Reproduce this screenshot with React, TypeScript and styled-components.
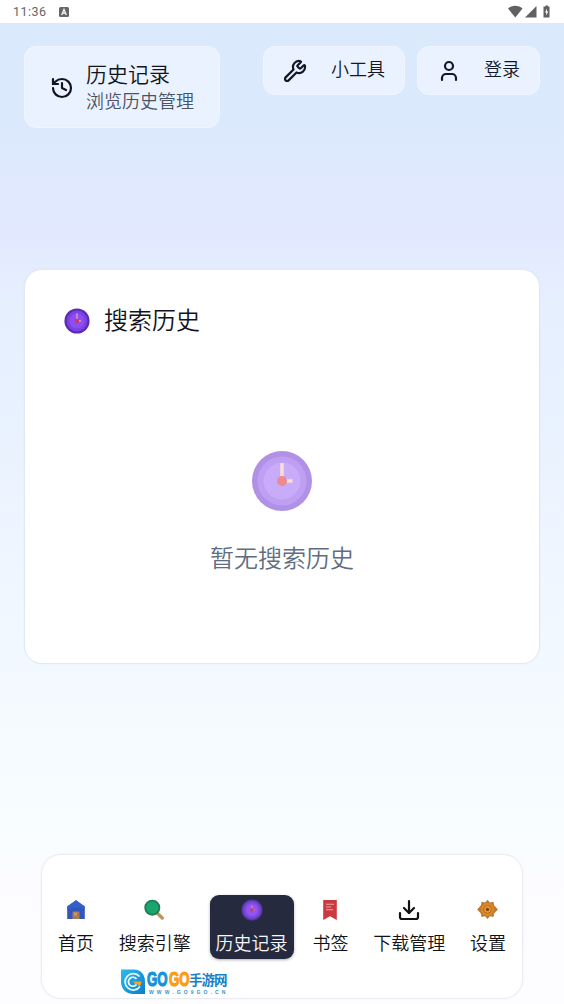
import React from "react";
import styled, { createGlobalStyle } from "styled-components";
import { Download, History, User, Wrench } from "lucide-react";

const Global = createGlobalStyle`
  * { box-sizing: border-box; }
  body { margin: 0; font-family: "Noto Sans CJK SC", sans-serif; font-weight: 350; color: #111420; }
  svg { display: block; flex: none; }
`;

const Screen = styled.div`
  width: 564px;
  height: 1004px;
  overflow: hidden;
  display: flex;
  flex-direction: column;
`;

const StatusBar = styled.div`
  height: 23px;
  flex: none;
  background: #fff;
  display: flex;
  align-items: center;
  padding: 0 13px 0 13px;
  font: 12.5px/22px Roboto, sans-serif;
  letter-spacing: 0.5px;
  color: #666;
`;

const StatusTime = styled.span`
  margin-right: 12px;
`;

const StatusIcons = styled.div`
  margin-left: auto;
  display: flex;
`;

const Page = styled.main`
  position: relative;
  flex: 1;
  display: flex;
  flex-direction: column;
  padding: 23px 24px 5px;
  background: linear-gradient(180deg, #dbe9fd 0%, #dce9fd 12%, #e1e9fe 17%, #e2e9fe 22%, #e6effe 28%, #e8f1fe 40%, #eef5ff 52%, #f3f9ff 68%, #f8fdff 82%, #fcfbff 88%, #fdfdff 100%);
`;

const Header = styled.header`
  display: flex;
  align-items: flex-start;
  gap: 12px;
`;

const Tile = styled.div`
  display: flex;
  align-items: center;
  background: #ebf2ff;
  border: 1px solid #f0f5ff;
  border-radius: 12px;
`;

const TitleTile = styled(Tile)`
  width: 196px;
  height: 82px;
  padding: 2px 0 0 25px;
  gap: 12px;
  margin-right: auto;
`;

const TitleText = styled.div`
  display: flex;
  flex-direction: column;
  padding-bottom: 5px;
`;

const Title = styled.h1`
  margin: 0;
  font-size: 21px;
  font-weight: 350;
  line-height: 28px;
`;

const Subtitle = styled.span`
  font-size: 18px;
  line-height: 26px;
  color: #4a5263;
`;

const ActionTile = styled(Tile)<{ $width: number }>`
  width: ${(p) => p.$width}px;
  height: 49px;
  padding: 0 19px;
  justify-content: space-between;
  font-size: 18px;
  line-height: 26px;
  color: #141824;
  & > span { margin-top: -5px; }
`;

const HistoryCard = styled.section`
  margin-top: 141px;
  height: 395px;
  border: 1px solid #e3e9f3;
  border-radius: 18px;
  background: #fff;
  box-shadow: 0 0 2px rgba(40, 60, 100, 0.05);
  display: flex;
  flex-direction: column;
`;

const CardHeading = styled.h2`
  margin: 0;
  padding: 33px 0 0 39px;
  display: flex;
  align-items: center;
  gap: 14px;
  font-size: 24px;
  line-height: 36px;
  font-weight: 350;
  & > span { margin: -2px 0 2px; }
`;

const EmptyState = styled.div`
  padding-top: 112px;
  display: flex;
  flex-direction: column;
  align-items: center;
  gap: 28px;
  font-size: 24px;
  line-height: 36px;
  color: #5f6d82;
`;

const NavBar = styled.nav`
  margin: auto 17px 0;
  height: 145px;
  padding: 40px 9px 0 10px;
  border: 1px solid #e9ecf1;
  border-radius: 20px;
  background: #fff;
  box-shadow: 0 0 3px rgba(40, 60, 100, 0.05);
  display: flex;
  align-items: flex-start;
  justify-content: space-between;
  & > :last-child { margin-right: 1px; }
`;

const NavItem = styled.div<{ $active?: boolean }>`
  height: 64px;
  padding: 3px 6px 0;
  border-radius: 9px;
  display: flex;
  flex-direction: column;
  align-items: center;
  font-size: 18px;
  line-height: 26px;
  gap: 7px;
  color: ${(p) => (p.$active ? "#f7f8fc" : "#111216")};
  background: ${(p) => (p.$active ? "#252a3e" : "transparent")};
  box-shadow: ${(p) => (p.$active ? "0 1px 3px rgba(20, 24, 40, 0.35)" : "none")};
`;

const Watermark = styled.div`
  position: absolute;
  left: 120px;
  top: 946px;
  display: flex;
  gap: 2px;
`;

const WatermarkText = styled.div`
  display: flex;
  flex-direction: column;
`;

const Brand = styled.div`
  display: flex;
  align-items: center;
  height: 20px;
  font: 700 21px/20px "Liberation Sans", sans-serif;
`;

const BrandPart = styled.span<{ $orange?: boolean }>`
  display: block;
  width: 21.5px;
  white-space: nowrap;
  -webkit-text-stroke: 1.2px ${(p) => (p.$orange ? "#fb9c13" : "#1592d8")};
  color: ${(p) => (p.$orange ? "#fb9c13" : "#1592d8")};
  transform: scaleX(0.63);
  transform-origin: left;
`;

const BrandCn = styled.span`
  font: 700 13.5px/20px "Noto Sans CJK SC", sans-serif;
  letter-spacing: -1px;
  margin-left: -1px;
  color: #1681c9;
`;

const BrandUrl = styled.span`
  font: 700 5px/6px "Liberation Sans", sans-serif;
  letter-spacing: 3.1px;
  padding-left: 2px;
  color: #2697d5;
  white-space: nowrap;
`;

function ClockIcon({ size }: { size: number }) {
  return (
    <svg width={size} height={size} viewBox="0 0 60 60">
      <circle cx="30" cy="30" r="29" fill="#5b2bb8" />
      <circle cx="30" cy="30" r="24" fill="#7a42e2" />
      <circle cx="30" cy="30" r="17.5" fill="#8d4df0" />
      <path d="M30 12v18M30 30h9" stroke="#e2a0b8" strokeWidth="3" />
      <circle cx="30" cy="30" r="5" fill="#c8386c" />
    </svg>
  );
}

function EmptyClockIcon() {
  return (
    <svg width="60" height="60" viewBox="0 0 60 60">
      <circle cx="30" cy="30" r="30" fill="#b091e6" />
      <circle cx="30" cy="30" r="24.5" fill="#bf9ff3" />
      <circle cx="30" cy="30" r="18.5" fill="#c8abf9" />
      <path d="M30 12v18M30 30h10.5" stroke="#fadbd5" strokeWidth="3.6" />
      <circle cx="30" cy="30" r="5" fill="#eb8b8f" />
    </svg>
  );
}

function GlowClockIcon() {
  return (
    <svg width="24" height="24" viewBox="0 0 24 24">
      <defs>
        <radialGradient id="glow">
          <stop offset="0.45" stopColor="#9455ee" />
          <stop offset="0.8" stopColor="#6e41ce" />
          <stop offset="1" stopColor="#3c2d78" />
        </radialGradient>
      </defs>
      <circle cx="12" cy="12" r="10.8" fill="url(#glow)" />
      <path d="M12 7.5V12h3" fill="none" stroke="#d58bbd" strokeWidth="1.2" />
      <circle cx="12" cy="12" r="1.8" fill="#c03e78" />
    </svg>
  );
}

function HomeIcon() {
  return (
    <svg width="22" height="24" viewBox="0 0 22 24">
      <path d="M2.2 8.6 11 2.2l8.8 6.4V21H2.2z" fill="#3157bd" />
      <path d="M2.2 8.6 11 2.2l8.8 6.4v2.800L16 9.500H6l-3.800 1.900z" fill="#3560c9" />
      <path d="M7.500 13.500h7V21h-7z" fill="#a97c58" />
      <path d="M9 14.500h3v3H9z" fill="#c8986a" />
    </svg>
  );
}

function SearchIcon() {
  return (
    <svg width="24" height="24" viewBox="1 0 24 24">
      <path d="m15.5 15.5 4.8 4.5" stroke="#b8975f" strokeWidth="3.4" strokeLinecap="round" />
      <circle cx="10.3" cy="9.7" r="8" fill="#1d7d58" />
      <circle cx="10.3" cy="9.7" r="6.2" fill="#1aa56e" />
    </svg>
  );
}

function BookmarkIcon() {
  return (
    <svg width="18" height="24" viewBox="0 0 18 24">
      <path d="M2.2 2h13.6v20L9 18.3 2.2 22z" fill="#cb3a40" />
      <path d="M5 6.2h8M5 9h5M5 11.8h7" stroke="#eea3a2" strokeWidth="1.1" />
    </svg>
  );
}

function GearIcon() {
  return (
    <svg width="24" height="24" viewBox="0.5 0 24 24">
      <path d="m12 1.8 2.4 2.7 3.6-.8.6 3.500 3.800 4.200-3.800 4.200-.6 3.500-3.600-.8-2.400 2.700-2.400-2.700-3.600.8-.6-3.500-3.800-4.200 3.800-4.200.6-3.500 3.600.8z" fill="#bd7a35" />
      <circle cx="12" cy="11.4" r="6.5" fill="#dc8928" />
      <circle cx="12" cy="11.4" r="4" fill="#ef962b" stroke="#b5681f" strokeWidth="1" />
      <circle cx="12" cy="11.4" r="1.7" fill="#7d441d" />
    </svg>
  );
}

function BrandMark() {
  return (
    <svg width="25" height="25" viewBox="0 0 25 25">
      <defs>
        <linearGradient id="drop" x1="0" y1="0" x2="1" y2="1">
          <stop stopColor="#31b9eb" />
          <stop offset="1" stopColor="#087fca" />
        </linearGradient>
      </defs>
      <path d="M1 .5h13C21 .5 25 6 25 12.5V25H13C6 25 1 19.5 1 13z" fill="url(#drop)" />
      <path d="M19.5 7.5a8.2 8.2 0 1 0 .5 10" fill="none" stroke="#e8f8ff" strokeWidth="1.7" />
      <path d="M16.5 10a4.5 4.5 0 1 0 0 5.5" fill="none" stroke="#fff" strokeWidth="1.7" />
      <path d="M13 12.5h8.5c0 2-1 4-2.500 5l-1.800-2.600H15z" fill="#faa12a" />
    </svg>
  );
}

export default function App() {
  return (
    <Screen>
      <Global />
      <StatusBar>
        <StatusTime>11:36</StatusTime>
        <svg width="10" height="10" viewBox="0 0 10 10">
          <rect width="10" height="10" rx="1.5" fill="#666" />
          <path d="M2.7 8 5 2.3 7.3 8M3.6 6.2h2.8" fill="none" stroke="#fff" strokeWidth="1.2" />
        </svg>
        <StatusIcons>
          <svg width="43" height="14" viewBox="0 0 43 14">
            <path d="M0 3.6C4-.1 10.500-.1 14.500 3.600L7.300 12.500z" fill="#616161" />
            <path d="M28.5 1v11.5H17z" fill="#616161" />
            <path d="M36.5 1.6h1V.5H40v1.100h1.500v11h-6v-11z" fill="#616161" />
            <path d="M39 3.5 37 7.5h1.300v3L40.300 6.500H39z" fill="#fff" />
          </svg>
        </StatusIcons>
      </StatusBar>
      <Page>
        <Header>
          <TitleTile>
            <History size={24} strokeWidth={2.2} />
            <TitleText>
              <Title>历史记录</Title>
              <Subtitle>浏览历史管理</Subtitle>
            </TitleText>
          </TitleTile>
          <ActionTile $width={142}>
            <Wrench size={24} strokeWidth={2.2} />
            <span>小工具</span>
          </ActionTile>
          <ActionTile $width={123}>
            <User size={24} strokeWidth={2.2} />
            <span>登录</span>
          </ActionTile>
        </Header>
        <HistoryCard>
          <CardHeading>
            <ClockIcon size={26} />
            <span>搜索历史</span>
          </CardHeading>
          <EmptyState>
            <EmptyClockIcon />
            <span>暂无搜索历史</span>
          </EmptyState>
        </HistoryCard>
        <NavBar>
          <NavItem><HomeIcon /><span>首页</span></NavItem>
          <NavItem><SearchIcon /><span>搜索引擎</span></NavItem>
          <NavItem $active><GlowClockIcon /><span>历史记录</span></NavItem>
          <NavItem><BookmarkIcon /><span>书签</span></NavItem>
          <NavItem><Download size={24} strokeWidth={2.2} /><span>下载管理</span></NavItem>
          <NavItem><GearIcon /><span>设置</span></NavItem>
        </NavBar>
        <Watermark>
          <BrandMark />
          <WatermarkText>
            <Brand>
              <BrandPart>GO</BrandPart>
              <BrandPart $orange>GO</BrandPart>
              <BrandCn>手游网</BrandCn>
            </Brand>
            <BrandUrl>WWW.GO9GO.CN</BrandUrl>
          </WatermarkText>
        </Watermark>
      </Page>
    </Screen>
  );
}
